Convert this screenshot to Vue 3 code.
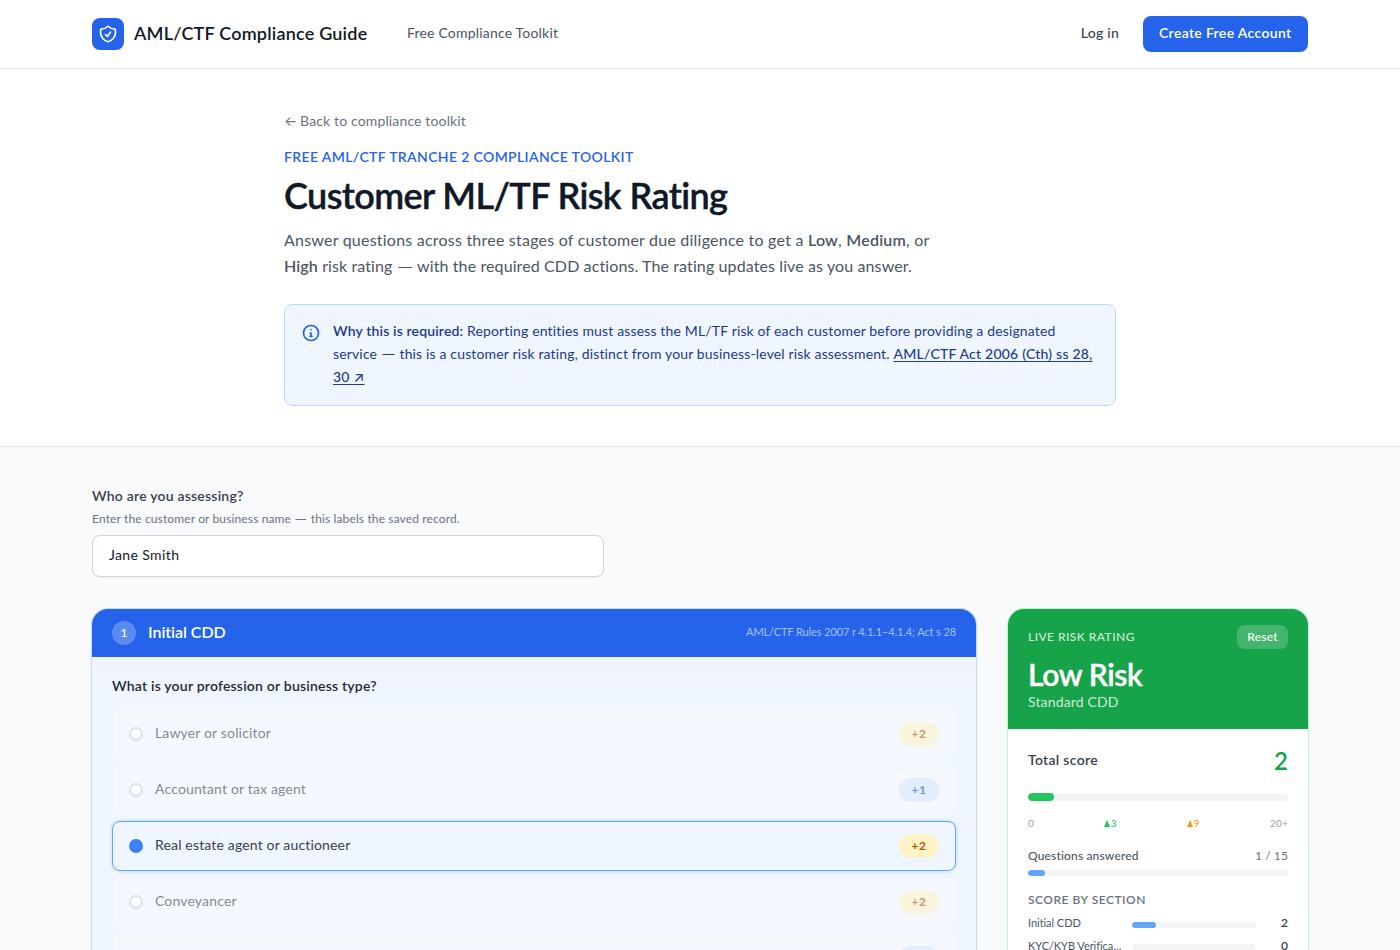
<template>
  <div class="page">
    <header class="topbar">
      <div class="topbar-inner">
        <div class="brand">
          <span class="brand-mark">
            <svg width="20" height="20" viewBox="0 0 24 24" fill="none" stroke="currentColor" stroke-width="2" stroke-linecap="round" stroke-linejoin="round">
              <path d="M9 12.75 11.25 15 15 9.75m-3-7.036A11.959 11.959 0 0 1 3.598 6 11.99 11.99 0 0 0 3 9.749c0 5.592 3.824 10.29 9 11.623 5.176-1.332 9-6.03 9-11.622 0-1.31-.21-2.571-.598-3.751h-.152c-3.196 0-6.1-1.248-8.25-3.285Z" />
            </svg>
          </span>
          <span class="brand-name">AML/CTF Compliance Guide</span>
        </div>
        <a class="nav-link">Free Compliance Toolkit</a>
        <div class="topbar-actions">
          <a class="login">Log in</a>
          <a class="signup">Create Free Account</a>
        </div>
      </div>
    </header>

    <section class="hero">
      <div class="hero-inner">
        <a class="back"><span class="arrow">←</span> Back to compliance toolkit</a>
        <p class="eyebrow">Free AML/CTF Tranche 2 Compliance Toolkit</p>
        <h1>Customer ML/TF Risk Rating</h1>
        <p class="lead">
          Answer questions across three stages of customer due diligence to get a <strong>Low</strong>, <strong>Medium</strong>, or<br />
          <span class="lead-end"><strong>High</strong> risk rating <span class="dash">—</span> with the required CDD actions. The rating updates live as you answer.</span>
        </p>
        <div class="notice">
          <svg class="notice-icon" width="20" height="20" viewBox="0 0 24 24" fill="none" stroke="currentColor" stroke-width="2" stroke-linecap="round" stroke-linejoin="round">
            <path d="M21 12a9 9 0 1 1-18 0 9 9 0 0 1 18 0z" />
            <path d="M13.2 16h-2.4M12 16v-4h-1M12 8h.01" />
          </svg>
          <p>
            <strong>Why this is required:</strong> Reporting entities must assess the ML/TF risk of each customer before providing a designated<br />
            service <span class="dash">—</span> this is a customer risk rating, distinct from your business-level risk assessment.
            <a class="act">AML/CTF Act 2006 (Cth) ss 28,<br />30 <span class="arrow">↗</span></a>
          </p>
        </div>
      </div>
    </section>

    <main class="content">
      <div class="subject">
        <label for="subject">Who are you assessing?</label>
        <p class="hint">Enter the customer or business name <span class="dash">—</span> this labels the saved record.</p>
        <input id="subject" v-model="subject" type="text" />
      </div>

      <div class="columns">
        <section class="card stage">
          <div class="stage-head">
            <span class="stage-number">1</span>
            <h2>Initial CDD</h2>
            <span class="stage-ref">AML/CTF Rules 2007 r 4.1.1–4.1.4; Act s 28</span>
          </div>
          <div class="stage-body">
            <p class="question">What is your profession or business type?</p>
            <div class="options">
              <div
                v-for="(option, index) in options"
                :key="index"
                class="option"
                :class="{ selected: index === selected }"
                @click="selected = index"
              >
                <span class="radio"></span>
                <span class="option-label">{{ option.label }}</span>
                <span class="points" :class="{ amber: option.points > 1 }">
                  <template v-if="option.label">+{{ option.points }}</template>
                </span>
              </div>
            </div>
          </div>
        </section>

        <aside class="card rating">
          <div class="rating-head">
            <div class="rating-top">
              <span class="rating-title">Live Risk Rating</span>
              <button class="reset" @click="selected = null">Reset</button>
            </div>
            <div class="rating-value">Low Risk</div>
            <div class="rating-sub">Standard CDD</div>
          </div>
          <div class="rating-body">
            <div class="total">
              <span>Total score</span>
              <strong>{{ total }}</strong>
            </div>
            <div class="bar bar-total">
              <div class="fill green" :style="{ width: total / 20 * 100 + '%' }"></div>
            </div>
            <div class="scale">
              <span>0</span>
              <span class="mark medium"><i></i>3</span>
              <span class="mark high"><i></i>9</span>
              <span>20+</span>
            </div>
            <div class="answered">
              <span>Questions answered</span>
              <span class="answered-count">{{ answered }} / 15</span>
            </div>
            <div class="bar">
              <div class="fill" :style="{ width: answered / 15 * 100 + '%' }"></div>
            </div>
            <h3>Score by section</h3>
            <div v-for="section in sections" :key="section.name" class="section-row">
              <span class="section-name">{{ section.name }}</span>
              <div class="bar">
                <div class="fill" :style="{ width: section.score / 10 * 100 + '%' }"></div>
              </div>
              <span class="section-score">{{ section.score }}</span>
            </div>
          </div>
        </aside>
      </div>
    </main>
  </div>
</template>

<script setup>
import { ref, computed } from 'vue'

const subject = ref('Jane Smith')
const selected = ref(2)

const options = [
  { label: 'Lawyer or solicitor', points: 2 },
  { label: 'Accountant or tax agent', points: 1 },
  { label: 'Real estate agent or auctioneer', points: 2 },
  { label: 'Conveyancer', points: 2 },
  { label: '', points: 1 }
]

const total = computed(() => (selected.value === null ? 0 : options[selected.value].points))
const answered = computed(() => (selected.value === null ? 0 : 1))

const sections = computed(() => [
  { name: 'Initial CDD', score: total.value },
  { name: 'KYC/KYB Verification', score: 0 }
])
</script>

<style>
body {
  margin: 0;
  background: #f9fafb;
}
</style>

<style scoped>
* {
  box-sizing: border-box;
}

.page {
  height: 950px;
  overflow: hidden;
  background: #f9fafb;
  color: #111827;
  font-family: "Lato", "Inter", sans-serif;
  font-size: 14px;
  line-height: 20px;
  letter-spacing: 0.16px;
  font-variant-ligatures: none;
}

p, h1, h2, h3 {
  margin: 0;
}

strong {
  font-weight: 600;
}

.arrow {
  font-family: "Inter", sans-serif;
  line-height: 1;
}

.back .arrow {
  letter-spacing: -1px;
}

.dash {
  display: inline-block;
  transform: scaleX(1.3);
  margin: 0 1.8px;
}

.topbar {
  height: 69px;
  background: #fff;
  border-bottom: 1px solid #e5e7eb;
}

.topbar-inner {
  width: 1216px;
  height: 68px;
  margin: 0 auto;
  display: flex;
  align-items: center;
}

.brand {
  display: flex;
  align-items: center;
  gap: 10px;
  width: 315px;
}

.brand-mark {
  width: 32px;
  height: 32px;
  border-radius: 8px;
  background: #2563eb;
  color: #fff;
  display: flex;
  align-items: center;
  justify-content: center;
}

.brand-name {
  padding-bottom: 2px;
  font-size: 18px;
  font-weight: 600;
  letter-spacing: 0.21px;
}

.nav-link {
  padding-bottom: 2px;
  color: #4b5563;
  letter-spacing: 0.19px;
}

.topbar-actions {
  margin-left: auto;
  display: flex;
  align-items: center;
  gap: 24px;
}

.login {
  padding-bottom: 2px;
  font-weight: 500;
  color: #374151;
  letter-spacing: 0.25px;
}

.signup {
  padding: 7px 16px 9px;
  width: 165px;
  border-radius: 8px;
  background: #2563eb;
  color: #fff;
  font-weight: 600;
  letter-spacing: 0.34px;
  white-space: nowrap;
}

.hero {
  height: 378px;
  background: #fff;
  border-bottom: 1px solid #e5e7eb;
}

.hero-inner {
  width: 832px;
  margin: 0 auto;
  padding-top: 42px;
}

.back {
  display: block;
  color: #6b7280;
  letter-spacing: 0.14px;
}

.eyebrow {
  margin-top: 16px;
  color: #2563eb;
  font-weight: 600;
  letter-spacing: 0.36px;
  text-transform: uppercase;
}

h1 {
  margin-top: 8px;
  font-size: 36px;
  line-height: 40px;
  font-weight: 600;
  letter-spacing: -0.6px;
  -webkit-text-stroke: 0.4px currentColor;
}

.lead {
  margin-top: 12px;
  font-size: 16px;
  line-height: 26px;
  color: #4b5563;
  letter-spacing: 0.22px;
}

.lead-end {
  letter-spacing: 0.11px;
}

.notice {
  height: 102px;
  margin-top: 25px;
  padding: 15px 16px;
  display: flex;
  gap: 12px;
  background: #eff6ff;
  border: 1px solid #bfdbfe;
  border-radius: 8px;
  color: #1e3a8a;
  line-height: 22.75px;
  white-space: nowrap;
}

.notice p {
  letter-spacing: 0.15px;
}

.notice-icon {
  flex: none;
  margin-top: 3px;
  color: #2563eb;
}

.act {
  font-weight: 500;
  letter-spacing: 0.22px;
  text-decoration: underline;
  text-underline-offset: 2px;
}

.content {
  width: 1216px;
  margin: 0 auto;
  padding-top: 39px;
}

.subject {
  display: flex;
  flex-direction: column;
}

.subject label {
  font-weight: 600;
  color: #374151;
  letter-spacing: 0.22px;
}

.hint {
  margin-top: 5px;
  font-size: 12px;
  line-height: 16px;
  color: #6b7280;
  letter-spacing: 0.13px;
}

.subject input {
  margin-top: 8px;
  width: 512px;
  height: 42px;
  padding: 0 16px 3px;
  border: 1px solid #d1d5db;
  border-radius: 8px;
  background: #fff;
  box-shadow: 0 1px 2px rgba(0, 0, 0, 0.05);
  font: inherit;
  color: #111827;
  letter-spacing: 0.38px;
  outline: none;
}

.columns {
  margin-top: 32px;
  display: grid;
  grid-template-columns: 884px 300px;
  gap: 32px;
  align-items: start;
}

.card {
  border-radius: 16px;
  overflow: hidden;
  min-height: 400px;
}

.stage {
  background: #eff6ff;
  box-shadow: 0 0 0 1px #bfdbfe, 0 1px 3px rgba(0, 0, 0, 0.1);
}

.stage-head {
  height: 48px;
  padding: 0 20px;
  display: flex;
  align-items: center;
  gap: 12px;
  background: #2563eb;
  color: #fff;
}

.stage-number {
  width: 24px;
  height: 24px;
  border-radius: 50%;
  background: rgba(255, 255, 255, 0.25);
  font-size: 12px;
  line-height: 24px;
  font-weight: 500;
  text-align: center;
}

h2 {
  padding-bottom: 2px;
  font-size: 16px;
  font-weight: 600;
  letter-spacing: -0.04px;
}

.stage-ref {
  margin-left: auto;
  padding-bottom: 2px;
  font-size: 11px;
  color: rgba(255, 255, 255, 0.6);
  letter-spacing: -0.11px;
}

.stage-body {
  padding: 19px 20px;
}

.question {
  font-weight: 600;
  color: #1f2937;
  letter-spacing: 0.21px;
}

.options {
  margin-top: 13px;
  display: flex;
  flex-direction: column;
  gap: 6px;
}

.option {
  height: 50px;
  padding: 0 16px;
  display: flex;
  align-items: center;
  gap: 12px;
  border: 1px solid transparent;
  border-radius: 8px;
  background-color: rgba(255, 255, 255, 0.6);
  background-clip: padding-box;
  color: #374151;
  opacity: 0.6;
}

.option.selected {
  border-color: #60a5fa;
  background: #eff6ff;
  box-shadow: 0 0 0 2px #dbeafe;
  opacity: 1;
}

.option-label {
  padding-bottom: 2px;
}

.radio {
  width: 14px;
  height: 14px;
  border: 2px solid #d1d5db;
  border-radius: 50%;
  background: #fff;
}

.selected .radio {
  border-color: #3b82f6;
  background: #3b82f6;
}

.points {
  margin-left: auto;
  width: 40px;
  height: 24px;
  border-radius: 12px;
  background: #dbeafe;
  color: #1d4ed8;
  font-size: 12px;
  line-height: 24px;
  font-weight: 700;
  text-align: center;
  letter-spacing: 0.6px;
}

.points.amber {
  background: #fef3c7;
  color: #b45309;
}

.rating {
  background: #fff;
  box-shadow: 0 0 0 1px #bbf7d0, 0 1px 3px rgba(0, 0, 0, 0.1);
}

.rating-head {
  height: 120px;
  padding: 16px 20px;
  background: #16a34a;
  color: #fff;
}

.rating-top {
  display: flex;
  align-items: center;
  justify-content: space-between;
}

.rating-title {
  font-size: 12px;
  font-weight: 500;
  letter-spacing: 0.45px;
  text-transform: uppercase;
  color: rgba(255, 255, 255, 0.8);
}

.reset {
  width: 51px;
  height: 24px;
  padding: 0 0 2px;
  border: none;
  border-radius: 8px;
  background: rgba(255, 255, 255, 0.2);
  color: #fff;
  font: 500 12px "Lato", sans-serif;
  letter-spacing: 0.2px;
}

.rating-value {
  margin-top: 7px;
  font-size: 30px;
  line-height: 36px;
  font-weight: 600;
  letter-spacing: -0.35px;
  -webkit-text-stroke: 0.4px currentColor;
}

.rating-sub {
  color: rgba(255, 255, 255, 0.8);
}

.rating-body {
  padding: 16px 20px;
}

.total {
  height: 32px;
  display: flex;
  align-items: center;
  justify-content: space-between;
  color: #374151;
  font-weight: 600;
  letter-spacing: 0.3px;
}

.total span {
  padding-bottom: 2px;
}

.total strong {
  font-size: 24px;
  font-weight: 600;
  letter-spacing: 0;
  color: #16a34a;
}

.bar {
  height: 6px;
  border-radius: 4px;
  background: #f3f4f6;
  overflow: hidden;
}

.bar-total {
  height: 8px;
  margin-top: 16px;
}

.fill {
  height: 100%;
  border-radius: 4px;
  background: #60a5fa;
}

.fill.green {
  background: #22c55e;
}

.scale {
  margin-top: 14px;
  display: flex;
  justify-content: space-between;
  font-size: 10px;
  line-height: 16px;
  color: #9ca3af;
}

.mark {
  display: flex;
  align-items: center;
}

.mark i {
  margin-right: 0.5px;
  border: 3.5px solid transparent;
  border-top: none;
  border-bottom: 7px solid currentColor;
}

.mark.medium {
  color: #22c55e;
}

.mark.high {
  color: #f59e0b;
}

.answered {
  margin-top: 17px;
  margin-bottom: 6px;
  display: flex;
  justify-content: space-between;
  font-size: 12px;
  line-height: 16px;
  font-weight: 500;
  color: #4b5563;
}

.answered-count {
  font-weight: 400;
  color: #6b7280;
  letter-spacing: 0.1px;
}

h3 {
  margin-top: 16px;
  margin-bottom: 7px;
  font-size: 12px;
  line-height: 16px;
  font-weight: 600;
  letter-spacing: 0.5px;
  text-transform: uppercase;
  color: #6b7280;
}

.section-row {
  height: 16px;
  margin-bottom: 6.5px;
  display: grid;
  grid-template-columns: 95px 124px 24px;
  column-gap: 8px;
  padding-left: 0;
  justify-content: space-between;
  align-items: center;
  font-size: 11px;
  line-height: 16px;
  color: #4b5563;
}

.section-name {
  overflow: hidden;
  text-overflow: ellipsis;
  white-space: nowrap;
  letter-spacing: -0.05px;
}

.section-row .bar {
  margin-top: 3px;
}

.section-score {
  text-align: right;
  font-size: 12px;
  font-weight: 600;
  color: #374151;
}
</style>
